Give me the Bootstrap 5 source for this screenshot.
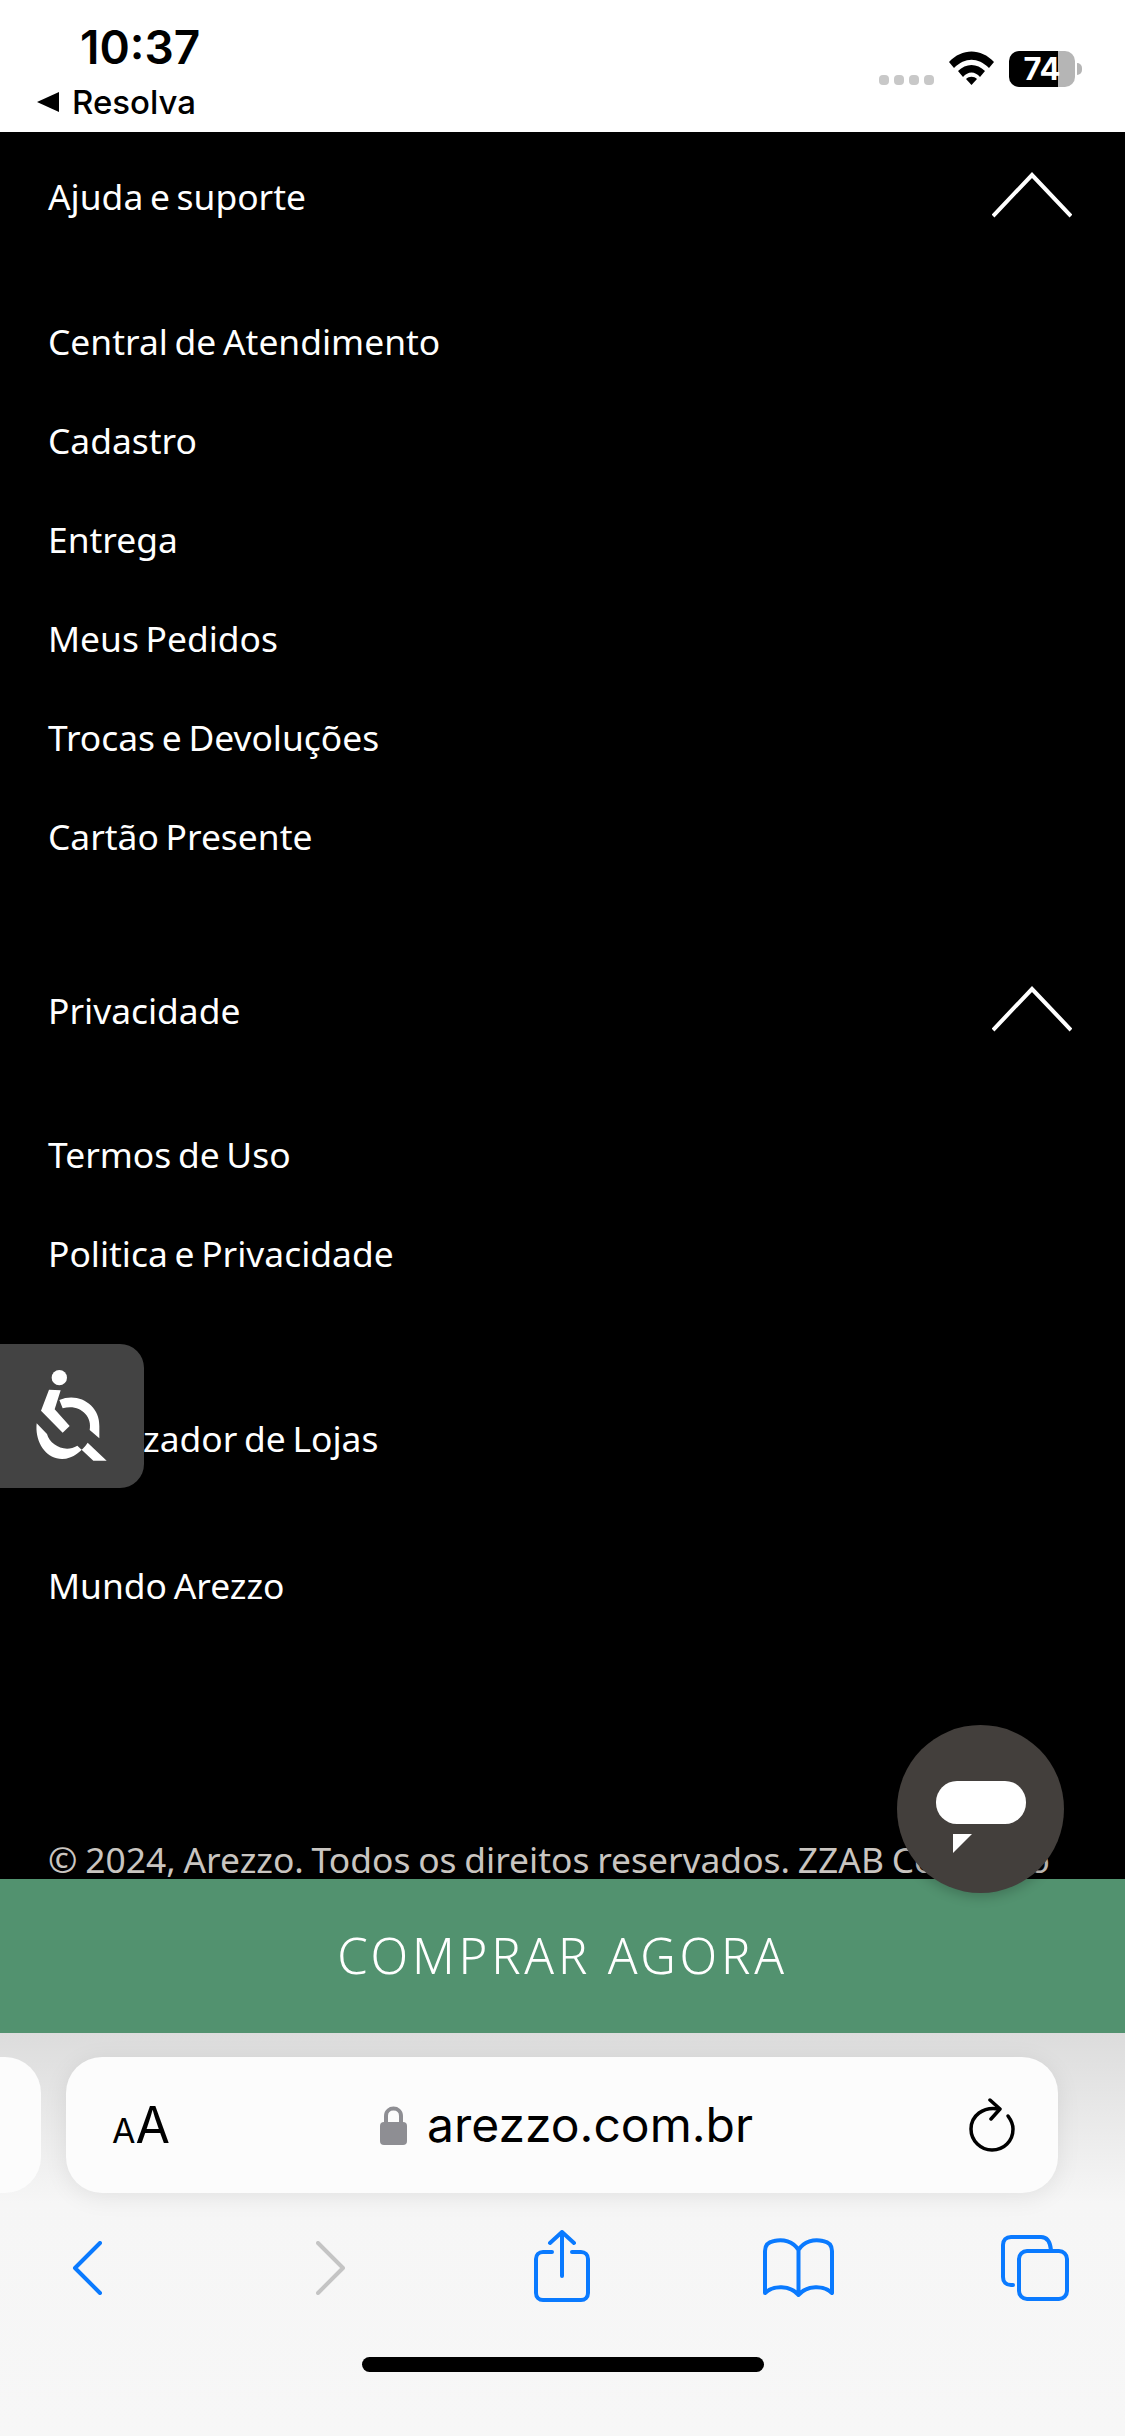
<!DOCTYPE html>
<html lang="pt-BR">
<head>
    <meta charset="UTF-8">
    <meta name="viewport" content="width=device-width, initial-scale=1.0">
    <title>Arezzo</title>
    <link href="https://cdn.jsdelivr.net/npm/bootstrap@5.3.3/dist/css/bootstrap.min.css" rel="stylesheet">
    <style>
        html, body { margin: 0; background: #000; }
        .phone { width: 1125px; height: 2436px; position: relative; overflow: hidden; font-family: "Noto Sans", sans-serif; font-weight: 375; }

        /* status bar */
        .status-top { height: 132px; background: #fff; color: #000; font-family: Inter, sans-serif; flex: none; }
        .status-left { padding: 22px 0 0 37px; }
        .clock { font-size: 46px; line-height: 50px; font-weight: 600; margin-left: 43px; }
        .resolva { font-size: 33px; line-height: 38px; margin-top: 11px; gap: 13px; font-weight: 500; }
        .back-tri { width: 22px; height: 20px; }
        .status-right { padding: 51px 43px 0 0; gap: 15px; }
        .sig-dots { gap: 5px; margin-top: 24px; }
        .sig-dots i { display: block; width: 10px; height: 10px; border-radius: 4px; background: #c8c8c8; }
        .batt { gap: 2px; }
        .batt-body { width: 66px; height: 36px; border-radius: 10px; background: linear-gradient(90deg, #000 49px, #b5b5b5 49px); color: #fff; font-size: 31px; font-weight: 700; line-height: 36px; text-align: center; }
        .batt-nub { width: 5px; height: 12px; border-radius: 0 5px 5px 0; background: #b5b5b5; }

        /* footer menu */
        .foot-menu { background: #000; color: #fff; min-height: 0; overflow: hidden; padding: 0 53px 0 48px; }
        .foot-head { height: 130px; font-size: 35.4px; word-spacing: -2.5px; }
        .foot-head svg { margin-top: -4px; }
        .foot-list { margin: 0; padding: 0; list-style: none; font-size: 35.4px; word-spacing: -2.5px; }
        .foot-list li { height: 99px; line-height: 99px; }
        .gap-a { margin-top: 30px; }
        .gap-b { margin-top: 60px; }
        .gap-c { margin-top: 29px; }
        .gap-d { margin-top: 71px; }
        .gap-e { margin-top: 17px; }
        .copy-line { margin-top: 189px; font-size: 35.4px; line-height: 38px; word-spacing: -1.4px; color: #c9c5c0; white-space: nowrap; }

        /* buy bar */
        .buy-bar { height: 154px; flex: none; background: #52926f; color: #fff; font-size: 49px; font-weight: 350; letter-spacing: 3.8px; }

        /* safari */
        .safari { height: 403px; flex: none; background: linear-gradient(#dcdcdc, #f6f6f6 170px, #f7f7f7); padding-top: 24px; }
        .url-row { gap: 25px; height: 136px; }
        .tab-peek { width: 41px; border-radius: 0 36px 36px 0; background: #fcfcfc; }
        .url-bar { width: 992px; border-radius: 36px; background: #fcfcfc; box-shadow: 0 4px 24px rgba(0,0,0,.08); padding: 0 43px 0 46px; color: #000; font-family: Inter, sans-serif; font-weight: 400; }
        .aa-small { font-size: 34px; }
        .aa-big { font-size: 50px; }
        .url-text { font-size: 48px; line-height: 56px; gap: 20px; margin-right: 6px; }
        .tool-row { padding-top: 37px; height: 96px; }
        .tool-row svg { display: block; flex: none; fill: none; stroke: #0a7aff; stroke-width: 4; stroke-linecap: round; stroke-linejoin: round; }
        .tool-row .tool-off { stroke: #c4c4c4; }
        .t-back { margin: 11px 0 0 72px; }
        .t-fwd { margin: 11px 0 0 214px; }
        .t-share { margin: 0 0 0 188px; }
        .t-book { margin: 8px 0 0 173px; }
        .t-tabs { margin: 5px 0 0 167px; }
        .home-pill { width: 402px; height: 15px; border-radius: 8px; background: #000; margin: 68px auto 0; }

        /* floating */
        .a11y-btn { position: absolute; left: 0; top: 1344px; width: 144px; height: 144px; background: #434343; border-radius: 0 24px 24px 0; }
        .chat-btn { position: absolute; left: 897px; top: 1725px; width: 167px; height: 168px; border-radius: 50%; background: #433f3c; box-shadow: 0 4px 12px rgba(0,0,0,.2); }
    </style>
</head>
<body>
    <div class="phone d-flex flex-column">
        <div class="status-top d-flex justify-content-between">
            <div class="status-left">
                <div class="clock">10:37</div>
                <div class="resolva d-flex align-items-center">
                    <svg class="back-tri" viewBox="0 0 22 20"><path d="M0 10 22 0V20Z" fill="#000"/></svg>
                    <span>Resolva</span>
                </div>
            </div>
            <div class="status-right d-flex align-items-start">
                <div class="sig-dots d-flex"><i></i><i></i><i></i><i></i></div>
                <svg width="45" height="34" viewBox="0 0 45 34">
                    <path d="M0 11C13-3 32-3 45 11L40 17C29 6 16 6 5 17Z" fill="#000"/>
                    <path d="M9 20C17 12 28 12 36 20L31 26C26 20 19 20 14 26Z" fill="#000"/>
                    <path d="M17 28C20 25 25 25 28 28L22.5 34Z" fill="#000"/>
                </svg>
                <div class="batt d-flex align-items-center">
                    <div class="batt-body">74</div>
                    <div class="batt-nub"></div>
                </div>
            </div>
        </div>

        <div class="foot-menu flex-grow-1">
            <div class="foot-head d-flex justify-content-between align-items-center">
                <span>Ajuda e suporte</span>
                <svg width="80" height="46" viewBox="0 0 80 46"><path d="M1 44 40 3 79 44" fill="none" stroke="#fff" stroke-width="4"/></svg>
            </div>
            <ul class="foot-list gap-a">
                <li>Central de Atendimento</li>
                <li>Cadastro</li>
                <li>Entrega</li>
                <li>Meus Pedidos</li>
                <li>Trocas e Devoluções</li>
                <li>Cartão Presente</li>
            </ul>
            <div class="foot-head gap-b d-flex justify-content-between align-items-center">
                <span>Privacidade</span>
                <svg width="80" height="46" viewBox="0 0 80 46"><path d="M1 44 40 3 79 44" fill="none" stroke="#fff" stroke-width="4"/></svg>
            </div>
            <ul class="foot-list gap-c">
                <li>Termos de Uso</li>
                <li>Politica e Privacidade</li>
            </ul>
            <div class="foot-head gap-d d-flex align-items-center">Localizador de Lojas</div>
            <div class="foot-head gap-e d-flex align-items-center">Mundo Arezzo</div>
            <div class="copy-line">© 2024, Arezzo. Todos os direitos reservados. ZZAB Comércio</div>
        </div>

        <div class="buy-bar d-flex align-items-center justify-content-center">COMPRAR AGORA</div>

        <div class="safari">
            <div class="url-row d-flex">
                <div class="tab-peek"></div>
                <div class="url-bar d-flex align-items-center justify-content-between">
                    <div><span class="aa-small">A</span><span class="aa-big">A</span></div>
                    <div class="url-text d-flex align-items-center">
                        <svg width="27" height="39" viewBox="0 0 27 39"><path d="M6 18V10C6 0 21 0 21 10V18" fill="none" stroke="#8e8e93" stroke-width="4"/><rect y="16" width="27" height="23" rx="4" fill="#8e8e93"/></svg>
                        <span>arezzo.com.br</span>
                    </div>
                    <svg width="46" height="54" viewBox="0 0 46 54" fill="none" stroke="#000" stroke-width="3.5" stroke-linecap="round" stroke-linejoin="round"><path d="M30 11C14 8 2 18 2 31 2 43 12 52 23 52 35 52 44 43 44 31 44 26 42 22 39 18"/><path d="M21 2 31 11 22 21"/></svg>
                </div>
            </div>
            <div class="tool-row d-flex">
                <svg class="t-back" width="30" height="54" viewBox="0 0 30 54"><path d="M28 2 3 27 28 52"/></svg>
                <svg class="t-fwd tool-off" width="30" height="54" viewBox="0 0 30 54"><path d="M2 2 27 27 2 52"/></svg>
                <svg class="t-share" width="56" height="72" viewBox="0 0 56 72"><path d="M18 22H9C5 22 2 25 2 29V63C2 67 5 70 9 70H47C51 70 54 67 54 63V29C54 25 51 22 47 22H38"/><path d="M28 46V2M16 13 28 2 40 13"/></svg>
                <svg class="t-book" width="71" height="59" viewBox="0 0 71 59"><path d="M35.500 12C30 3 20 1 11 3 5 4 2 8 2 13V55C10 47 27 47 35.500 57 44 47 61 47 69 55V13C69 8 66 4 60 3 51 1 41 3 35.500 12V57"/></svg>
                <svg class="t-tabs" width="68" height="66" viewBox="0 0 68 66"><path d="M12 50H10C5 50 2 47 2 42V10C2 5 5 2 10 2H40C45 2 49 5 50 15"/><rect x="18" y="16" width="48" height="48" rx="8"/></svg>
            </div>
            <div class="home-pill"></div>
        </div>

        <div class="a11y-btn">
            <svg width="144" height="144" viewBox="0 72 432 432" fill="#fff">
                <circle cx="178" cy="173" r="23"/>
                <path d="M147 209 182 211 164 268 209 318 188 338 123 272Z"/>
                <path d="M178 240C235 215 300 255 298 318L298 355 269 330C278 285 235 250 188 265Z"/>
                <path d="M110 310 141 342C150 375 195 400 232 377L280 422H320L263 368C245 395 210 425 170 415 130 405 105 360 110 310Z"/>
            </svg>
        </div>
        <div class="chat-btn">
            <svg width="167" height="168" viewBox="0 0 167 168" fill="#fff">
                <rect x="39" y="56" width="90" height="43" rx="21"/>
                <path d="M56 109H75L56 128Z"/>
            </svg>
        </div>
    </div>
    <script src="https://cdn.jsdelivr.net/npm/bootstrap@5.3.3/dist/js/bootstrap.bundle.min.js"></script>
</body>
</html>
